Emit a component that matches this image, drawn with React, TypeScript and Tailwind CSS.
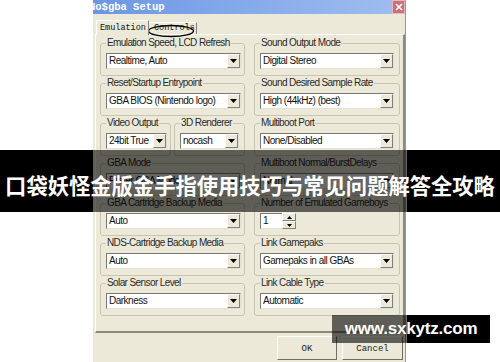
import React from 'react';

const Arrow = () => (
  <svg width="7" height="4" viewBox="0 0 7 4">
    <path d="M0 0h7L3.5 4z" fill="#000" />
  </svg>
);

function Combo({ value }: { value: string }) {
  return (
    <div className="flex h-[16px] bg-white border border-t-[#7a7a72] border-l-[#7a7a72] border-b-[#e2e0d4] border-r-[#e2e0d4]">
      <span className="flex-1 min-w-0 pl-[2px] text-[10px] leading-[14px] tracking-[-0.5px] text-[#111] whitespace-nowrap overflow-hidden">
        {value}
      </span>
      <div className="w-[13px] h-[14px] flex items-center justify-center bg-[#ece9d8] border border-t-white border-l-white border-b-[#808080] border-r-[#808080]">
        <Arrow />
      </div>
    </div>
  );
}

function Group({ label, children, wide }: { label: string; children: React.ReactNode; wide?: boolean }) {
  return (
    <fieldset
      className={`min-w-0 border border-[#c8c5b5] rounded-[3px] pt-[4px] pb-[6px] ${wide ? 'pl-[5px] pr-[5px]' : 'pl-[5px] pr-[3px]'}`}
    >
      <legend className="ml-0 px-[1px] text-[10px] leading-[12px] tracking-[-0.6px] text-[#2a2a2a] whitespace-nowrap">
        {label}
      </legend>
      {children}
    </fieldset>
  );
}

function Spin() {
  return (
    <div className="flex h-[16px] w-[36px]">
      <div className="w-[22px] h-full bg-white border border-t-[#7a7a72] border-l-[#7a7a72] border-b-[#e2e0d4] border-r-0 text-[10px] leading-[14px] pl-[2px] text-[#111]">
        1
      </div>
      <div className="w-[14px] h-full flex flex-col">
        <div className="h-[8px] flex items-center justify-center bg-[#ece9d8] border border-t-white border-l-white border-b-[#808080] border-r-[#808080]">
          <svg width="5" height="3" viewBox="0 0 5 3"><path d="M0 3h5L2.5 0z" fill="#000" /></svg>
        </div>
        <div className="h-[8px] flex items-center justify-center bg-[#ece9d8] border border-t-white border-l-white border-b-[#808080] border-r-[#808080]">
          <svg width="5" height="3" viewBox="0 0 5 3"><path d="M0 0h5L2.5 3z" fill="#000" /></svg>
        </div>
      </div>
    </div>
  );
}

export default function App() {
  return (
    <div className="relative w-[500px] h-[362px] overflow-hidden bg-white font-['Liberation_Sans',Arial,sans-serif]">
      {/* dialog window */}
      <div className="ml-[93px] w-[313px] h-full flex flex-col bg-[#ece9d8] border-r border-[#9a988c]">
        {/* title bar */}
        <div className="h-[14px] flex items-center bg-linear-to-r from-[#6c96e4] to-[#a0bff0] overflow-hidden">
          <span className="flex-1 -ml-[4px] text-white font-bold text-[10.5px] leading-[14px] font-['Liberation_Mono',monospace] whitespace-nowrap">
            No$gba Setup
          </span>
          <div className="w-[13px] h-[14px] flex items-center justify-center bg-[#c7707e] border border-[#e8b8c0]">
            <svg width="8" height="8" viewBox="0 0 8 8">
              <path d="M1 1l6 6M7 1L1 7" stroke="#fff" strokeWidth="1.6" />
            </svg>
          </div>
        </div>

        {/* tabs */}
        <div className="flex items-end pt-[6px] pl-[3px] font-['Liberation_Mono',monospace] text-[8.5px] text-[#111]">
          <div className="h-[15px] w-[53px] flex items-center pl-[3px] bg-[#ece9d8] border-t border-l border-white border-r border-r-[#808080] relative z-10 -mb-px">
            Emulation
          </div>
          <div className="relative h-[12px] w-[48px] flex items-center pl-[5px] border-t border-r border-t-white border-r-[#808080]">
            Controls
            <svg className="absolute left-[-2px] top-[1px]" width="50" height="14" viewBox="0 0 50 14">
              <ellipse cx="24" cy="7" rx="22.5" ry="5.5" fill="none" stroke="#000" strokeWidth="1.4" />
            </svg>
          </div>
        </div>

        {/* tab panel */}
        <div className="ml-[2px] w-[310px] h-[299px] border-t border-l border-white border-r-2 border-b-2 border-r-[#8c8a80] border-b-[#8c8a80] pt-[2px] pl-[4px] flex gap-[9px]">
          <div className="w-[145px] flex flex-col gap-[1px]">
            <Group label="Emulation Speed, LCD Refresh"><Combo value="Realtime, Auto" /></Group>
            <Group label="Reset/Startup Entrypoint"><Combo value="GBA BIOS (Nintendo logo)" /></Group>
            <div className="flex gap-[3px]">
              <div className="w-[71px]"><Group label="Video Output"><Combo value="24bit True" /></Group></div>
              <div className="w-[71px]"><Group label="3D Renderer" wide><Combo value="nocash" /></Group></div>
            </div>
            <Group label="GBA Mode"><Combo value="Prefer GBA Mode" /></Group>
            <Group label="GBA Cartridge Backup Media"><Combo value="Auto" /></Group>
            <Group label="NDS-Cartridge Backup Media"><Combo value="Auto" /></Group>
            <Group label="Solar Sensor Level"><Combo value="Darkness" /></Group>
          </div>
          <div className="w-[146px] flex flex-col gap-[1px]">
            <Group label="Sound Output Mode" wide><Combo value="Digital Stereo" /></Group>
            <Group label="Sound Desired Sample Rate" wide><Combo value="High (44kHz) (best)" /></Group>
            <Group label="Multiboot Port" wide><Combo value="None/Disabled" /></Group>
            <Group label="Multiboot Normal/BurstDelays" wide><Combo value="Normal" /></Group>
            <Group label="Number of Emulated Gameboys" wide><Spin /></Group>
            <Group label="Link Gamepaks" wide><Combo value="Gamepaks in all GBAs" /></Group>
            <Group label="Link Cable Type" wide><Combo value="Automatic" /></Group>
          </div>
        </div>

        {/* buttons */}
        <div className="flex justify-end gap-[5px] pr-[2px] pt-[3px] font-['Liberation_Mono',monospace] text-[9px] text-[#222]">
          <div className="w-[60px] h-[24px] flex items-center justify-center pt-[4px] border border-t-white border-l-white border-b-[#716f64] border-r-[#716f64]">
            OK
          </div>
          <div className="w-[61px] h-[24px] flex items-center justify-center pt-[4px] border border-t-white border-l-white border-b-[#716f64] border-r-[#716f64]">
            Cancel
          </div>
        </div>
      </div>

      {/* title banner */}
      <div className="absolute left-0 top-[150px] w-[500px] h-[62px] flex">
        <div className="w-[93px] bg-black" />
        <div className="w-[314px] bg-black/60" />
        <div className="flex-1 bg-black" />
        <div className="absolute inset-0 flex items-center justify-center pt-[8px] text-white text-[21.3px] font-bold whitespace-nowrap font-['Noto_Sans_CJK_SC','Noto_Sans',sans-serif]">
          口袋妖怪金版金手指使用技巧与常见问题解答全攻略
        </div>
      </div>

      {/* watermark */}
      <div className="absolute left-[332px] top-[315px] w-[158px] h-[28px] flex">
        <div className="w-[75px] bg-black/60" />
        <div className="flex-1 bg-black" />
        <div className="absolute inset-0 flex items-center justify-center text-white text-[17px] font-bold tracking-[-0.2px] whitespace-nowrap">
          www.sxkytz.com
        </div>
      </div>
    </div>
  );
}
